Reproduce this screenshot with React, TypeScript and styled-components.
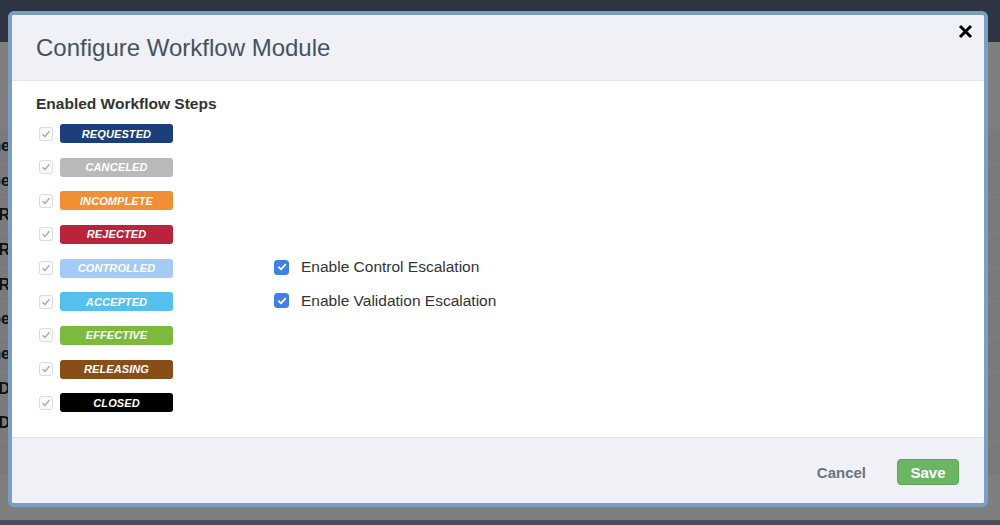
import React from "react";
import styled, { createGlobalStyle } from "styled-components";

const GlobalStyle = createGlobalStyle`
  html, body { margin: 0; padding: 0; }
  body {
    font-family: "Liberation Sans", Arial, Helvetica, sans-serif;
    width: 1000px;
    height: 525px;
    overflow: hidden;
  }
  * { box-sizing: border-box; }
`;

/* ---------- underlying page ---------- */
const Page = styled.div`
  width: 1000px;
  height: 525px;
  display: flex;
  flex-direction: column;
  background: #fff;
`;
const TopBar = styled.header`
  flex: none;
  height: 42px;
  background: #5c6886;
`;
const Toolbar = styled.div`
  flex: none;
  height: 86px;
  background: #fff;
`;
const Table = styled.div`
  flex: 1;
  display: flex;
  flex-direction: column;
  background: #fff;
`;
const TableRow = styled.div`
  flex: none;
  height: 34.7px;
  display: flex;
  align-items: center;
  border-top: 1px solid #ffffff;
  background: #f4f4f4;
`;
const FirstCell = styled.div`
  width: 10px;
  overflow: hidden;
  display: flex;
  justify-content: flex-end;
  white-space: nowrap;
  font-weight: 700;
  font-size: 16px;
  color: #222;
`;
const BottomBar = styled.footer`
  flex: none;
  height: 5px;
  background: #8ca0b8;
`;

/* ---------- modal ---------- */
const Backdrop = styled.div`
  position: fixed;
  inset: 0;
  background: rgba(0, 0, 0, 0.5);
`;
const Modal = styled.div`
  position: fixed;
  left: 8px;
  top: 11px;
  width: 980px;
  height: 496px;
  border: 4px solid #7b9fc3;
  border-radius: 6px;
  background: #fff;
  display: flex;
  flex-direction: column;
  overflow: hidden;
`;
const Header = styled.div`
  flex: none;
  height: 66px;
  background: #eff1f6;
  border-bottom: 1px solid #e3e5ea;
  display: flex;
  align-items: center;
  justify-content: space-between;
  padding: 0 11px 0 24px;
`;
const Title = styled.h2`
  margin: 0;
  font-size: 24px;
  font-weight: 400;
  color: #465262;
  line-height: 28px;
`;
const CloseButton = styled.button`
  align-self: flex-start;
  margin-top: 9px;
  width: 15px;
  height: 15px;
  padding: 0;
  border: 0;
  background: none;
  cursor: pointer;
  display: flex;
`;
const Body = styled.div`
  flex: 1;
  padding: 14px 24px 0 24px;
`;
const SectionTitle = styled.h3`
  margin: 0 0 11px 0;
  font-size: 15.5px;
  line-height: 18px;
  font-weight: 700;
  color: #333;
`;
const StepGrid = styled.div`
  display: grid;
  grid-template-columns: 235px auto;
  grid-auto-rows: 19px;
  row-gap: 14.67px;
  padding-left: 3px;
`;
const StepRow = styled.div`
  grid-column: 1;
  display: flex;
  align-items: center;
  gap: 7px;
`;
const DisabledBox = styled.span`
  width: 14px;
  height: 14px;
  border: 1px solid #dcdcdc;
  border-radius: 3px;
  background: #fafafa;
  display: flex;
  align-items: center;
  justify-content: center;
`;
const Badge = styled.span<{ $bg: string }>`
  width: 113px;
  height: 19px;
  border-radius: 3px;
  background: ${(p) => p.$bg};
  color: #fff;
  font-size: 11px;
  font-weight: 700;
  font-style: italic;
  display: flex;
  align-items: center;
  justify-content: center;
  letter-spacing: 0.1px;
`;
const OptionRow = styled.label<{ $row: number }>`
  grid-column: 2;
  grid-row: ${(p) => p.$row};
  margin-top: -2px;
  display: flex;
  align-items: center;
  gap: 12px;
  font-size: 15.5px;
  color: #333;
`;
const BlueBox = styled.span`
  width: 15px;
  height: 15px;
  border-radius: 3.5px;
  background: #3f80e8;
  display: flex;
  align-items: center;
  justify-content: center;
`;
const Footer = styled.div`
  flex: none;
  height: 66px;
  background: #eff1f6;
  border-top: 1px solid #e2e4e8;
  display: flex;
  align-items: center;
  justify-content: flex-end;
  gap: 31px;
  padding: 3px 25px 0 0;
`;
const CancelButton = styled.button`
  border: 0;
  background: none;
  padding: 0;
  font-family: inherit;
  font-size: 15px;
  font-weight: 700;
  color: #6b7380;
  cursor: pointer;
`;
const SaveButton = styled.button`
  width: 62px;
  height: 26px;
  border: 1px solid #5fa658;
  border-radius: 4px;
  background: #6cb564;
  color: #fff;
  font-family: inherit;
  font-size: 15px;
  font-weight: 700;
  padding: 0;
  cursor: pointer;
`;

const steps = [
  { label: "REQUESTED", color: "#1c3f7c" },
  { label: "CANCELED", color: "#b9b9b9" },
  { label: "INCOMPLETE", color: "#f28e34" },
  { label: "REJECTED", color: "#b9243a" },
  { label: "CONTROLLED", color: "#a4cbf6" },
  { label: "ACCEPTED", color: "#55c0ec" },
  { label: "EFFECTIVE", color: "#7cba3d" },
  { label: "RELEASING", color: "#894d17" },
  { label: "CLOSED", color: "#000000" },
];

const rowFragments = ["Name", "Type", "QR", "ER", "OR", "Type", "Name", "ID", "ND", ""];

const GrayCheck = () => (
  <svg width="10" height="10" viewBox="0 0 10 10">
    <path d="M1.6 5.2 L3.9 7.5 L8.4 2.3" fill="none" stroke="#a8a8a8" strokeWidth="1.3" />
  </svg>
);
const WhiteCheck = () => (
  <svg width="10" height="10" viewBox="0 0 10 10">
    <path d="M1.8 5.2 L4 7.4 L8.3 2.6" fill="none" stroke="#fff" strokeWidth="1.8" strokeLinecap="round" strokeLinejoin="round" />
  </svg>
);

export default function App() {
  return (
    <>
      <GlobalStyle />
      <Page>
        <TopBar />
        <Toolbar />
        <Table>
          {rowFragments.map((t, i) => (
            <TableRow key={i}>
              <FirstCell>{t}</FirstCell>
            </TableRow>
          ))}
        </Table>
        <BottomBar />
      </Page>
      <Backdrop />
      <Modal>
        <Header>
          <Title>Configure Workflow Module</Title>
          <CloseButton aria-label="Close">
            <svg width="15" height="15" viewBox="0 0 15 15">
              <path d="M2 2 L13 13 M13 2 L2 13" stroke="#000" strokeWidth="3" />
            </svg>
          </CloseButton>
        </Header>
        <Body>
          <SectionTitle>Enabled Workflow Steps</SectionTitle>
          <StepGrid>
            {steps.map((s) => (
              <StepRow key={s.label}>
                <DisabledBox>
                  <GrayCheck />
                </DisabledBox>
                <Badge $bg={s.color}>{s.label}</Badge>
              </StepRow>
            ))}
            <OptionRow $row={5}>
              <BlueBox>
                <WhiteCheck />
              </BlueBox>
              Enable Control Escalation
            </OptionRow>
            <OptionRow $row={6}>
              <BlueBox>
                <WhiteCheck />
              </BlueBox>
              Enable Validation Escalation
            </OptionRow>
          </StepGrid>
        </Body>
        <Footer>
          <CancelButton>Cancel</CancelButton>
          <SaveButton>Save</SaveButton>
        </Footer>
      </Modal>
    </>
  );
}
